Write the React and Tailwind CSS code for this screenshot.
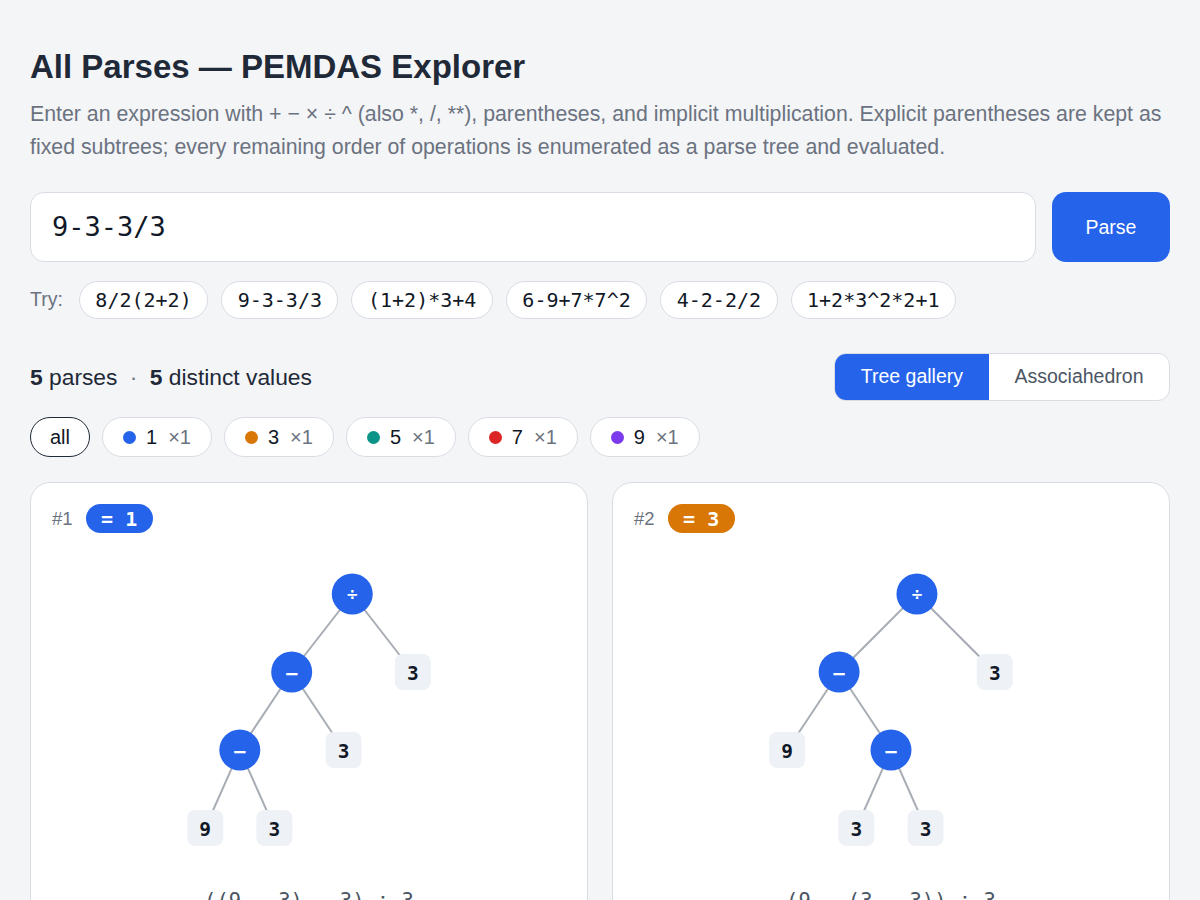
import React from 'react';

const L = (v) => ({ leaf: true, v });
const N = (op, l, r) => ({ op, l, r });

const cards = [
  {
    id: 1,
    value: 1,
    badge: 'bg-[#2563eb]',
    tree: N('÷', N('−', N('−', L(9), L(3)), L(3)), L(3)),
    expr: '((9 − 3) − 3) ÷ 3',
  },
  {
    id: 2,
    value: 3,
    badge: 'bg-[#d97706]',
    tree: N('÷', N('−', L(9), N('−', L(3), L(3))), L(3)),
    expr: '(9 − (3 − 3)) ÷ 3',
  },
];

const examples = ['8/2(2+2)', '9-3-3/3', '(1+2)*3+4', '6-9+7*7^2', '4-2-2/2', '1+2*3^2*2+1'];

const values = [
  { v: 1, dot: 'bg-[#2563eb]' },
  { v: 3, dot: 'bg-[#d97706]' },
  { v: 5, dot: 'bg-[#0d9488]' },
  { v: 7, dot: 'bg-[#dc2626]' },
  { v: 9, dot: 'bg-[#7c3aed]' },
];

function layout(tree, W, spacing, top, step) {
  const nodes = [];
  const edges = [];
  const countLeaves = (t) => (t.leaf ? 1 : countLeaves(t.l) + countLeaves(t.r));
  const n = countLeaves(tree);
  let idx = 0;
  const walk = (t, d) => {
    if (t.leaf) {
      const node = { x: W / 2 + (idx - (n - 1) / 2) * spacing, y: top + d * step, t };
      idx++;
      nodes.push(node);
      return node;
    }
    const a = walk(t.l, d + 1);
    const b = walk(t.r, d + 1);
    const node = { x: (a.x + b.x) / 2, y: top + d * step, t };
    edges.push([node, a], [node, b]);
    nodes.push(node);
    return node;
  };
  walk(tree, 0);
  return { nodes, edges };
}

function Tree({ tree }) {
  const W = 512;
  const { nodes, edges } = layout(tree, W, 69.2, 45, 78);
  return (
    <svg width={W} height={320} className="block mx-auto">
      {edges.map(([a, b], i) => (
        <line key={i} x1={a.x} y1={a.y} x2={b.x} y2={b.y} stroke="#a8adb5" strokeWidth="2" />
      ))}
      {nodes.map((nd, i) =>
        nd.t.leaf ? (
          <g key={i}>
            <rect x={nd.x - 18} y={nd.y - 18} width="36" height="36" rx="8" fill="#eef1f5" />
            <text
              x={nd.x}
              y={nd.y + 1}
              textAnchor="middle"
              dominantBaseline="central"
              fontFamily="DejaVu Sans Mono, monospace"
              fontWeight="700"
              fontSize="19.5"
              fill="#111827"
            >
              {nd.t.v}
            </text>
          </g>
        ) : (
          <g key={i}>
            <circle cx={nd.x} cy={nd.y} r="20.5" fill="#2563eb" />
            <text
              x={nd.x}
              y={nd.y + 1}
              textAnchor="middle"
              dominantBaseline="central"
              fontFamily="DejaVu Sans, sans-serif"
              fontWeight="700"
              fontSize={nd.t.op === '÷' ? 15 : 18}
              fill="#ffffff"
            >
              {nd.t.op}
            </text>
          </g>
        )
      )}
    </svg>
  );
}

export default function App() {
  return (
    <div className="min-h-[900px] bg-[#f4f5f7] font-['Liberation_Sans',Arial,sans-serif] text-[#1f2937]">
      <div className="mx-[30px] pt-[47px]">
        <h1 className="text-[33px] leading-[40px] font-bold text-[#1f2937]">All Parses — PEMDAS Explorer</h1>
        <p className="mt-[11px] text-[21.3px] leading-[33px] text-[#6b7280]">
          Enter an expression with + − × ÷ ^ (also *, /, **), parentheses, and implicit multiplication. Explicit
          parentheses are kept as fixed subtrees; every remaining order of operations is enumerated as a parse tree and
          evaluated.
        </p>

        <div className="mt-[28px] flex gap-4">
          <div className="flex-1 h-[70px] rounded-[14px] border border-[#d9dde3] bg-white flex items-center px-[21px]">
            <span className="font-['DejaVu_Sans_Mono',monospace] text-[27px] text-[#111827]">9-3-3/3</span>
          </div>
          <button className="w-[118px] h-[70px] rounded-[14px] bg-[#2563eb] text-white text-[19.5px] pt-[1px]">Parse</button>
        </div>

        <div className="mt-[19px] flex items-center gap-[13px]">
          <span className="text-[19.5px] text-[#6b7280] mr-[3px]">Try:</span>
          {examples.map((e) => (
            <span
              key={e}
              className="h-[38px] px-[15.5px] rounded-full border border-[#d9dde3] bg-white flex items-center font-['DejaVu_Sans_Mono',monospace] text-[20px] text-[#111827]"
            >
              {e}
            </span>
          ))}
        </div>

        <div className="mt-[34px] flex items-center justify-between">
          <div className="text-[22.8px] text-[#1f2937]">
            <b>5</b> parses <span className="text-[#6b7280] mx-[6px]">·</span> <b>5</b> distinct values
          </div>
          <div className="flex h-[48px] rounded-[12px] border border-[#d9dde3] bg-white overflow-hidden">
            <span className="flex items-center px-[26px] bg-[#2563eb] text-white text-[19.5px]">Tree gallery</span>
            <span className="flex items-center px-[25.5px] text-[#4b5563] text-[19.5px]">Associahedron</span>
          </div>
        </div>

        <div className="mt-[16px] flex items-center gap-[12px]">
          <span className="h-[40px] px-[19px] rounded-full border-[1.5px] border-[#1f2937] bg-white flex items-center text-[20px] text-[#111827]">
            all
          </span>
          {values.map((v) => (
            <span
              key={v.v}
              className="h-[40px] px-[20px] rounded-full border border-[#d9dde3] bg-white flex items-center text-[20px] text-[#111827]"
            >
              <span className={`w-[13px] h-[13px] rounded-full shrink-0 ${v.dot}`} />
              <span className="ml-[10px]">{v.v}</span>
              <span className="ml-[11px] text-[#6b7280]">×1</span>
            </span>
          ))}
        </div>

        <div className="mt-[25px] grid grid-cols-2 gap-6">
          {cards.map((c) => (
            <div key={c.id} className="h-[440px] rounded-[20px] border border-[#d9dde3] bg-white px-[21px] pt-[21px] overflow-hidden">
              <div className="flex items-center gap-[13px]">
                <span className="text-[18.5px] text-[#6b7280]">#{c.id}</span>
                <span
                  className={`h-[29px] px-[15.5px] rounded-full ${c.badge} text-white flex items-center font-['DejaVu_Sans_Mono',monospace] font-bold text-[20px]`}
                >
                  = {c.value}
                </span>
              </div>
              <div className="mt-[16px]">
                <Tree tree={c.tree} />
              </div>
              <div className="mt-[18px] text-center font-['DejaVu_Sans_Mono',monospace] text-[20.5px] leading-[28px] text-[#4b5563]">
                {c.expr}
              </div>
            </div>
          ))}
        </div>
      </div>
    </div>
  );
}
